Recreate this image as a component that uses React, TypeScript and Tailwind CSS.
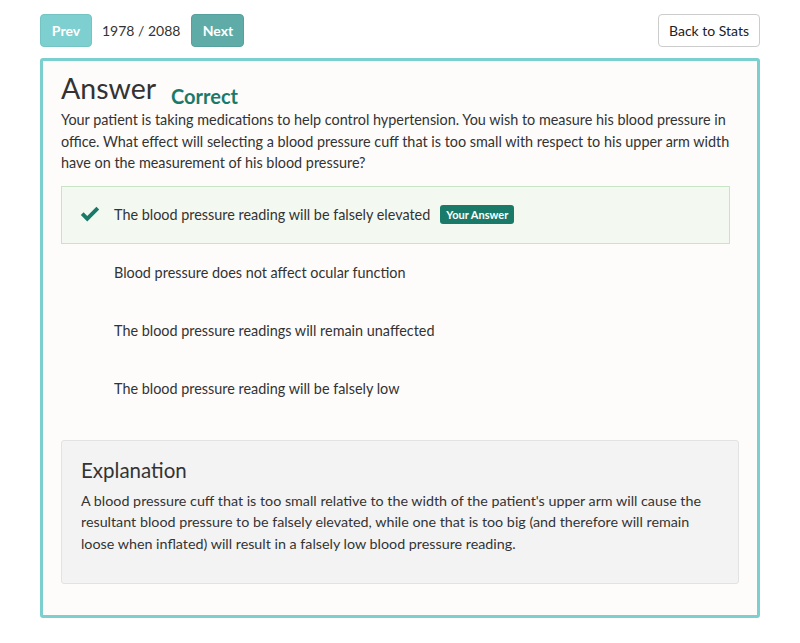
import React from "react";

function Check({ className }: { className?: string }) {
  return (
    <svg viewBox="0 0 24 18" className={className} fill="currentColor">
      <path d="M2 9.5 L5 6.5 L9 10.5 L19 0.5 L22 3.5 L9 16.5 Z" />
    </svg>
  );
}

const options = [
  { text: "The blood pressure reading will be falsely elevated", selected: true },
  { text: "Blood pressure does not affect ocular function", selected: false },
  { text: "The blood pressure readings will remain unaffected", selected: false },
  { text: "The blood pressure reading will be falsely low", selected: false },
];

export default function App() {
  return (
    <div
      className="min-h-[643px] bg-white text-[#333333] px-[40px] pt-[14px]"
      style={{ fontFamily: "Lato, 'Open Sans', sans-serif" }}
    >
      <div className="flex items-center h-[33px]">
        <button className="h-[33px] w-[52px] rounded-[4px] bg-[#7ecfcf] border border-[#74c4c4] text-white font-bold text-[14px]">
          Prev
        </button>
        <span className="ml-[10px] text-[14px] text-[#333]">1978 / 2088</span>
        <button className="ml-[11px] h-[33px] w-[53px] rounded-[4px] bg-[#5eaba8] border border-[#56a19e] text-white font-bold text-[14px]">
          Next
        </button>
        <button className="ml-auto h-[33px] w-[102px] rounded-[4px] bg-white border border-[#cccccc] text-[14px] text-[#222]">
          Back to Stats
        </button>
      </div>

      <div className="mt-[11px] border-[3px] border-[#7ccfcf] rounded-[3px] bg-[#fdfcfb] px-[18px] pt-[10px] pb-[31px]">
        <div className="flex items-end">
          <h1 className="text-[28.5px] leading-[34px] text-[#333]">Answer</h1>
          <span className="ml-[15px] text-[20px] font-bold text-[#1a7a6a] leading-[26px] mb-[-4px]">Correct</span>
        </div>
        <p className="mt-[4px] text-[14.4px] leading-[21.5px] text-[#333]">
          Your patient is taking medications to help control hypertension. You wish to measure his blood pressure in office. What effect will selecting a blood pressure cuff that is too small with respect to his upper arm width have on the measurement of his blood pressure?
        </p>

        <div className="mt-[12px] mr-[9px] flex flex-col">
          {options.map((o, i) => (
            <div
              key={i}
              className={
                "flex items-center h-[58px] border " +
                (o.selected ? "bg-[#f3f9f1] border-[#c9e3c7]" : "border-transparent")
              }
            >
              <Check
                className={
                  "ml-[17px] w-[22px] h-[17px] " + (o.selected ? "text-[#1a7a6a]" : "text-[#fdfcfb]")
                }
              />
              <span className="ml-[13px] text-[14.4px] text-[#333]">{o.text}</span>
              {o.selected && (
                <span className="ml-[10px] bg-[#1a7a6a] text-white text-[11px] font-bold rounded-[3px] px-[6px] h-[19px] leading-[19px]">
                  Your Answer
                </span>
              )}
            </div>
          ))}
        </div>

        <div className="mt-[22px] bg-[#f3f3f3] border border-[#e2e2e2] rounded-[3px] px-[19px] pt-[15px] pb-[29px]">
          <h2 className="text-[20.5px] leading-[28px] text-[#333]">Explanation</h2>
          <p className="mt-[6px] text-[14.3px] leading-[21.5px] text-[#333]">
            A blood pressure cuff that is too small relative to the width of the patient's upper arm will cause the resultant blood pressure to be falsely elevated, while one that is too big (and therefore will remain loose when inflated) will result in a falsely low blood pressure reading.
          </p>
        </div>
      </div>
    </div>
  );
}
